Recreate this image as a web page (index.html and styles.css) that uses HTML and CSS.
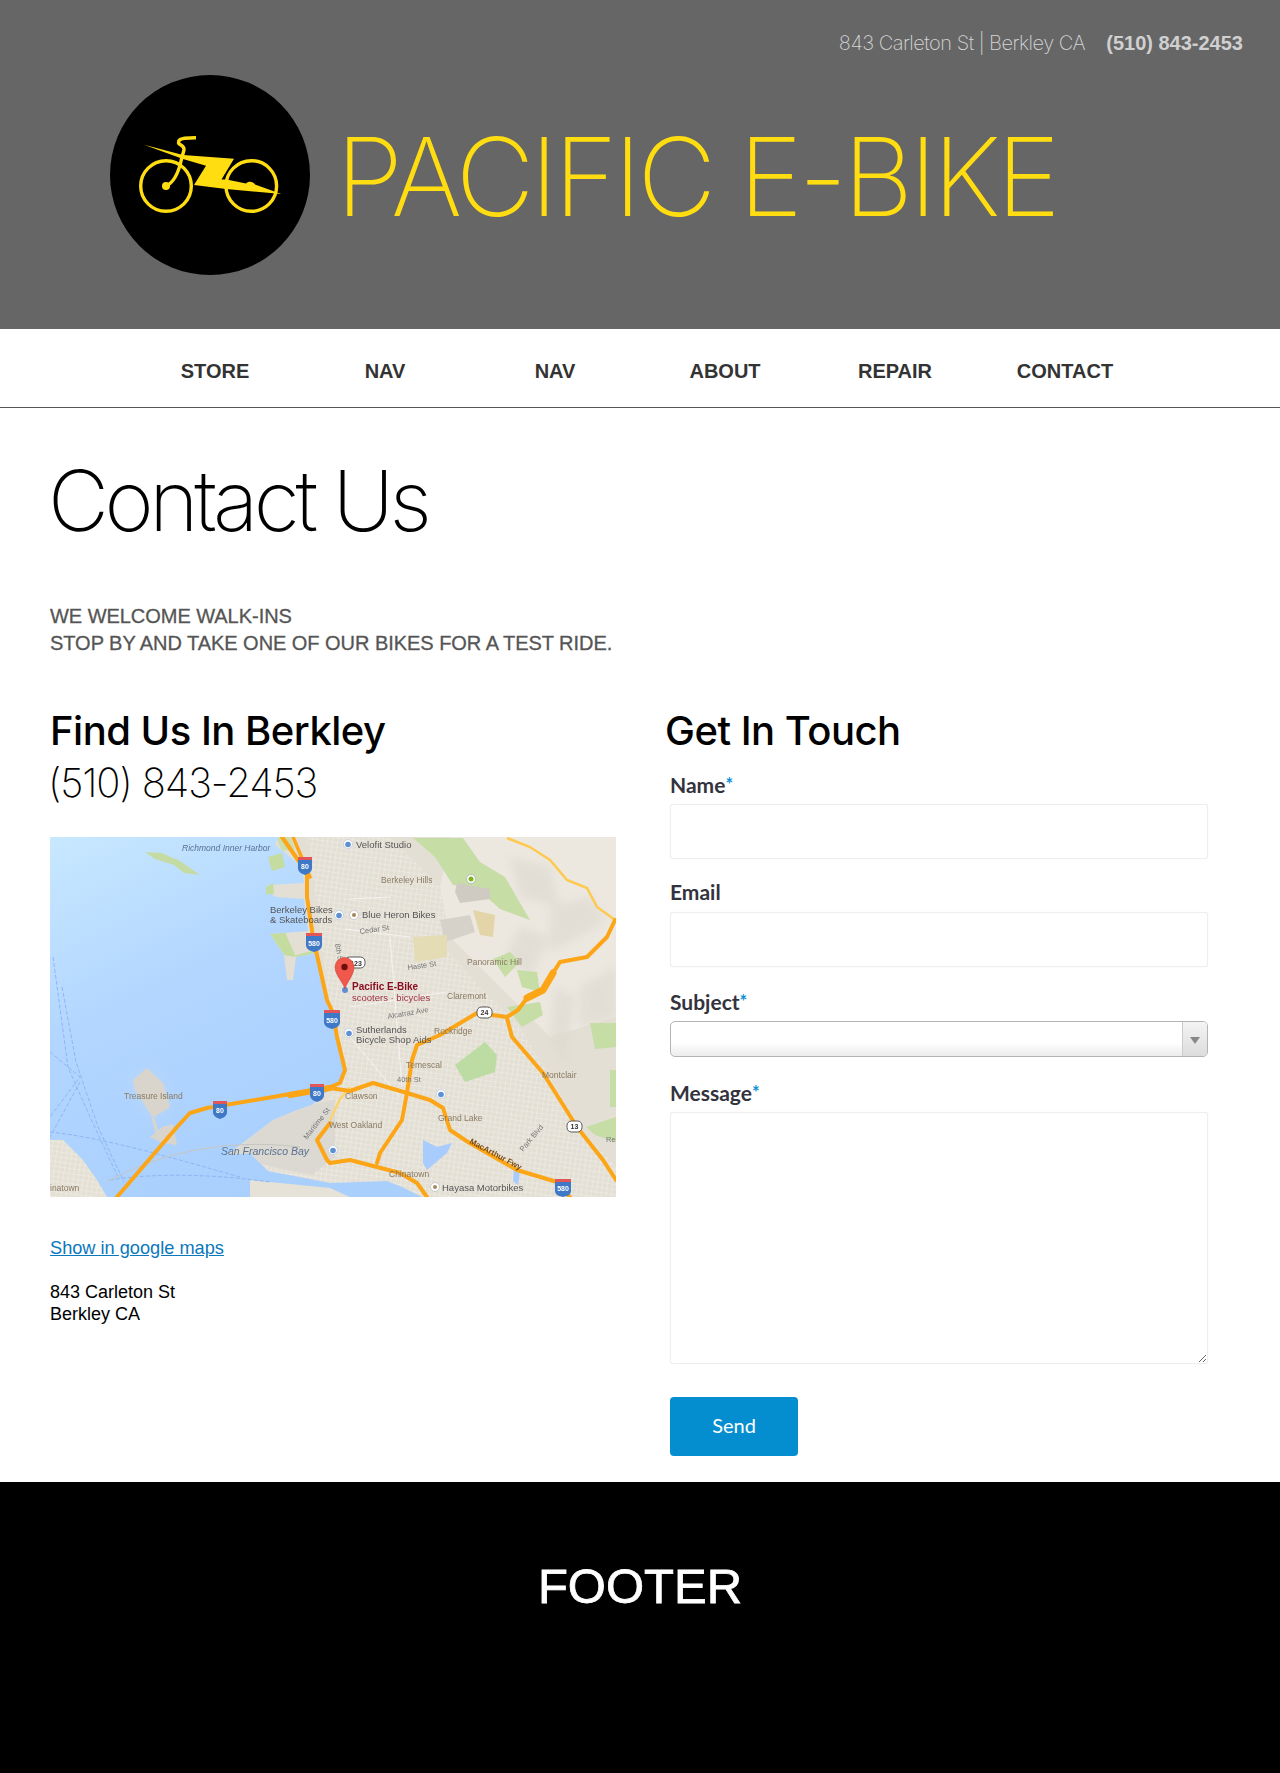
FILE: index.html
```html
<!DOCTYPE html>
<html lang="en">
<head>
<meta charset="utf-8">
<title>Pacific E-Bike</title>
<link rel="stylesheet" href="styles.css">
</head>
<body>
<header class="site-header">
  <div class="topline"><span>843 Carleton St | Berkley CA</span><strong>(510) 843-2453</strong></div>
  <div class="brand">
    <svg class="logo" viewBox="0 0 200 200" aria-hidden="true">
      <circle cx="100" cy="100" r="100" fill="#000"/>
      <g fill="none" stroke="#ffdd11">
        <circle cx="56" cy="111" r="25.300" stroke-width="3.400"/>
        <circle cx="141.300" cy="111" r="25.300" stroke-width="3.400"/>
        <path d="M56 111C65 107 69 96 71.500 84L74 75C75 69.500 67 70 68.700 67C68 63 76 63 86 62.700" stroke-width="3.400"/>
      </g>
      <g fill="#ffdd11">
        <circle cx="56" cy="111" r="4"/>
        <path d="M34 69.700L73 80L124 83.700L111.500 104.500L116.500 104.500L136 108.500C138 106 143 106 145 109.500L171.300 119L116 114L84 110L96 90.700L73 84Z"/>
      </g>
    </svg>
    <div class="brand-name">PACIFIC E-BIKE</div>
  </div>
</header>
<nav class="main-nav">
  <a>STORE</a><a>NAV</a><a>NAV</a><a>ABOUT</a><a>REPAIR</a><a>CONTACT</a>
</nav>
<main class="content">
  <h1>Contact Us</h1>
  <p class="intro">WE WELCOME WALK-INS<br>STOP BY AND TAKE ONE OF OUR BIKES FOR A TEST RIDE.</p>
  <div class="columns">
    <section class="col-left">
      <h2>Find Us In Berkley</h2>
      <div class="phone">(510) 843-2453</div>
      <svg class="map" viewBox="0 0 566 360" aria-label="Map of Berkeley and Oakland">
        <defs>
          <linearGradient id="bay" x1="0" y1="0" x2="0.6" y2="0.8">
            <stop offset="0" stop-color="#c8e8ff"/><stop offset="0.45" stop-color="#b2d6ff"/><stop offset="1" stop-color="#a9cffd"/>
          </linearGradient>
          <pattern id="grid" width="5" height="5" patternUnits="userSpaceOnUse" patternTransform="rotate(8)">
            <path d="M0 0H5M0 0V5" stroke="#fff" stroke-width=".7" fill="none"/>
          </pattern>
          <clipPath id="land-clip"><path d="M228 0L225 8L240 20L252 30L254 46L218 48L216 54L226 60L254 62L258 94L220 97L234 118L237 143L243 143L246 120L266 116L277 163L283 176L287 200L297 233L290 248L280 252L262 268L247 273L223 283L177 318L200 316L218 334L280 346L337 344L352 350L372 360L566 360V0Z"/></clipPath>
          <filter id="soft" x="0" y="0" width="100%" height="100%"><feGaussianBlur stdDeviation=".4"/></filter>
          <filter id="hill" x="-20%" y="-20%" width="140%" height="140%"><feGaussianBlur stdDeviation="4"/></filter>
          <filter id="halo" x="-30%" y="-30%" width="160%" height="160%"><feGaussianBlur stdDeviation="8"/></filter>
        </defs>
        <g filter="url(#soft)">
          <rect width="566" height="360" fill="url(#bay)"/>
          <g clip-path="url(#land-clip)">
            <rect width="566" height="360" fill="#e3dfd4"/>
            <path d="M258 0L340 0L400 60L395 110L430 150L470 190L500 240L530 290L566 330V360H200V340L290 250Z" fill="url(#grid)" opacity=".7"/>
            <path d="M223 283L262 268L285 262L285 320L262 338L222 330L180 318Z" fill="#dcd9d3"/>
            <path d="M400 0H566V180L500 200L450 150L400 100L390 50Z" fill="#ece8e0"/>
            <g filter="url(#hill)" fill="#dedad0" opacity=".7">
              <path d="M500 70L540 60L556 85L500 115Z"/><path d="M470 90L500 100L480 140L455 120Z"/><path d="M530 150L566 130V180L530 190Z"/><path d="M460 20L500 30L510 70L470 60Z"/><path d="M505 150L525 160L515 230L500 200Z"/>
            </g>
            <path d="M363 1L413 1L430 25L455 40L480 83L450 72L425 50L403 48L385 20Z" fill="#c6dda6"/>
            <path d="M407 46L440 52L440 62L410 66L405 55Z" fill="#cfcbc3"/>
            <path d="M390 83L420 78L425 95L395 105Z" fill="#d6d2ca"/>
            <path d="M423 73L445 78L443 100L430 98Z" fill="#e3d5a8"/>
            <path d="M363 100L397 98L397 120L365 125Z" fill="#e3dcb4"/>
            <path d="M443 122L460 115L470 125L455 140Z" fill="#c6dda6"/>
            <path d="M467 133L487 135L490 155L472 150Z" fill="#c6dda6"/>
            <path d="M457 170L490 165L493 178L472 190Z" fill="#c6dda6"/>
            <path d="M435 205L447 218L445 235L415 245L405 228Z" fill="#bcdca3"/>
            <path d="M540 186L566 186V210L545 212Z" fill="#c6dda6"/>
            <path d="M560 233H566V270H560Z" fill="#c6dda6"/>
            <path d="M536 290L566 280V305L545 298Z" fill="#c6dda6"/>
            <path d="M226 0H240L245 12L232 14Z" fill="#c6dda6" opacity=".8"/>
            <path d="M220 97L235 95L246 120L234 118Z" fill="#c4dc9f"/>
            <path d="M246 118L266 113L268 130L250 140Z" fill="#c4dc9f"/>
            <path d="M373 303L387 310L402 306L397 316L377 333L373 326Z" fill="#a9ccff"/>
            <path d="M464 328L470 334L468 348L463 344Z" fill="#a9ccff"/>
            <path d="M295 92L360 100M300 170L397 155M300 200L350 260M300 62L340 60M340 100L352 250" fill="none" stroke="#fff" stroke-width="1" opacity=".6"/>
          </g>
          <path d="M200 343L280 351L300 360H200Z" fill="#e6e2d7"/>
          <path d="M0 303L13 303L33 323L47 343L57 360H0Z" fill="#e4e0d4"/>
          <path d="M0 303L13 303L33 323L47 343L57 360H0Z" fill="url(#grid)" opacity=".7"/>
          <path d="M83 243L97 231L113 246L120 270L103 281L85 253Z" fill="#bcd8f8" filter="url(#halo)"/>
          <path d="M83 243L97 231L113 246L120 270L103 281L85 253Z" fill="#d9d5cc"/>
          <path d="M100 300L112 290L123 287L127 308L112 306Z" fill="#d9d5cc"/>
          <path d="M103 281L107 295" stroke="#d9d5cc" stroke-width="3"/>
          <path d="M95 15L112 16L130 24L150 38L134 36L124 28L105 22Z" fill="#c5dba4"/>
          <path d="M218 20L232 16L235 30L222 34Z" fill="#c4dc9f"/>
          <path d="M216 50L223 46L224 57L216 57Z" fill="#c4dc9f"/>
          <path d="M3 120L18 230L40 280L68 340M12 150L26 225L48 290L74 345M0 215L30 240L0 280M0 295C50 300 120 320 190 340M60 343C110 335 170 338 220 345M30 245L0 300" fill="none" stroke="#8fb6f2" stroke-width="1" stroke-dasharray="4 2"/>
          <path d="M57 345C100 320 170 300 250 310" fill="none" stroke="#c8c6c0" stroke-width="1"/>
          <path d="M457 1L480 10L500 23L517 43L537 51L547 70L565 83" fill="none" stroke="#fdc94f" stroke-width="2.500"/>
          <path d="M300 250L290 262L280 283" fill="none" stroke="#fbd36f" stroke-width="2.500"/>
          <g fill="none" stroke="#fca514" stroke-linejoin="round" stroke-linecap="round">
            <path d="M232 0L257 36L257 60L263 100L277 163L283 176L287 200L295 233L290 246L280 250L223 260L157 271L140 276L127 290L67 360" stroke-width="4"/>
            <path d="M243 0L260 40" stroke-width="3.500"/>
            <path d="M280 251L240 258" stroke-width="6"/>
            <path d="M280 251L300 254L323 246L357 256L380 263L393 271L400 293L418 305L467 333L507 345L520 360" stroke-width="4"/>
            <path d="M357 256L362 223L367 208L390 198L427 176L457 180L468 173L477 161L493 153L503 136L510 125L537 120L557 100L565 83" stroke-width="4"/>
            <path d="M477 161L493 153L503 136" stroke-width="7"/>
            <path d="M357 256L352 283L330 316L327 326" stroke-width="4"/>
            <path d="M457 181L462 200L493 236L527 290L553 323L566 343" stroke-width="4"/>
            <path d="M280 326L300 323L327 330L350 336L367 346L377 360" stroke-width="4"/>
            <path d="M280 286L267 303L277 323L280 326" stroke-width="4"/>
          </g>
          <g fill="#3f78c8">
            <path d="M248 22H262V31C262 35 258 37 255 38C252 37 248 35 248 31Z"/><path d="M256 98H272V108C272 112 268 114 264 115C260 114 256 112 256 108Z"/><path d="M274 175H290V185C290 189 286 191 282 192C278 191 274 189 274 185Z"/><path d="M163 266H177V275C177 279 173 281 170 282C167 281 163 279 163 275Z"/><path d="M260 249H274V258C274 262 270 264 267 265C264 264 260 262 260 258Z"/><path d="M505 344H521V354C521 358 517 359 513 360C509 359 505 358 505 354Z"/>
          </g>
          <g fill="#e2575a">
            <rect x="248" y="20" width="14" height="3"/><rect x="256" y="96" width="16" height="3"/><rect x="274" y="173" width="16" height="3"/><rect x="163" y="264" width="14" height="3"/><rect x="260" y="247" width="14" height="3"/><rect x="505" y="342" width="16" height="3"/>
          </g>
          <g class="shield-text" text-anchor="middle">
            <text x="255" y="32">80</text><text x="264" y="109">580</text><text x="282" y="186">580</text><text x="170" y="276">80</text><text x="267" y="259">80</text><text x="513" y="354">580</text>
          </g>
          <g fill="#fff" stroke="#555">
            <rect x="427" y="170" width="15" height="11" rx="4.500"/><rect x="517" y="284" width="15" height="11" rx="4.500"/><rect x="295" y="120" width="20" height="11" rx="4.500"/>
          </g>
          <g class="shield-dark" text-anchor="middle"><text x="434.500" y="178">24</text><text x="524.500" y="292">13</text><text x="306" y="128.500">123</text></g>
          <g fill="#fff" stroke="#c8d4e4">
            <circle cx="298" cy="7" r="4.500"/><circle cx="289" cy="78" r="4.500"/><circle cx="299" cy="196" r="4.500"/><circle cx="391" cy="257" r="4.500"/><circle cx="283" cy="313" r="4.500"/>
          </g>
          <g fill="#5d8fd2">
            <circle cx="298" cy="7.500" r="2.800"/><circle cx="289" cy="78.500" r="2.800"/><circle cx="299" cy="196.500" r="2.800"/><circle cx="391" cy="257.500" r="2.800"/><circle cx="283" cy="313.500" r="2.800"/><circle cx="295" cy="153" r="3"/>
          </g>
          <g fill="#fff" stroke="#ccc"><circle cx="304" cy="78" r="4.500"/><circle cx="385" cy="350" r="4.500"/></g>
          <g fill="#a58560"><circle cx="304" cy="78" r="2"/><circle cx="385" cy="350" r="2"/></g>
          <circle cx="421" cy="42" r="4.500" fill="#fff" stroke="#bbb"/><circle cx="421" cy="42" r="2.500" fill="#7cb518"/>
          <g class="ml">
            <text x="306" y="11" class="poi">Velofit Studio</text>
            <text x="331" y="46" class="area">Berkeley Hills</text>
            <text x="312" y="81" class="poi">Blue Heron Bikes</text>
            <text x="220" y="76" class="poi">Berkeley Bikes</text>
            <text x="220" y="86" class="poi">&amp; Skateboards</text>
            <text x="310" y="97" class="street" transform="rotate(-8 310 97)">Cedar St</text>
            <text x="285" y="107" class="street" transform="rotate(80 285 107)">8th St</text>
            <text x="358" y="133" class="street" transform="rotate(-8 358 133)">Haste St</text>
            <text x="417" y="128" class="area">Panoramic Hill</text>
            <text x="397" y="162" class="area">Claremont</text>
            <text x="338" y="182" class="street" transform="rotate(-10 338 182)">Alcatraz Ave</text>
            <text x="306" y="196" class="poi">Sutherlands</text>
            <text x="306" y="206" class="poi">Bicycle Shop Aids</text>
            <text x="384" y="197" class="area">Rockridge</text>
            <text x="356" y="231" class="area">Temescal</text>
            <text x="347" y="245" class="street">40th St</text>
            <text x="492" y="241" class="area">Montclair</text>
            <text x="295" y="262" class="area">Clawson</text>
            <text x="279" y="291" class="area">West Oakland</text>
            <text x="388" y="284" class="area">Grand Lake</text>
            <text x="339" y="340" class="area">Chinatown</text>
            <text x="392" y="354" class="poi">Hayasa Motorbikes</text>
            <text x="473" y="315" class="street" transform="rotate(-50 473 315)">Park Blvd</text>
            <text x="419" y="306" class="fwy" transform="rotate(28 419 306)">MacArthur Fwy</text>
            <text x="257" y="303" class="street" transform="rotate(-52 257 303)">Maritime St</text>
            <text x="132" y="14" class="water">Richmond Inner Harbor</text>
            <text x="171" y="318" class="water big">San Francisco Bay</text>
            <text x="74" y="262" class="area">Treasure Island</text>
            <text x="0" y="354" class="area">inatown</text>
            <text x="556" y="305" class="street">Re</text>
            <text x="302" y="153" class="pin-title">Pacific E-Bike</text>
            <text x="302" y="164" class="pin-sub">scooters · bicycles</text>
          </g>
          <path d="M295 152C293 145 285 138 285 130A9.500 9.500 0 0 1 304 130C304 138 297 145 295 152Z" fill="#f0584c" stroke="#c8362c" stroke-width=".5"/>
          <circle cx="294.500" cy="130" r="3.200" fill="#701010"/>
        </g>
      </svg>
      <a class="maps-link">Show in google maps</a>
      <p class="address">843 Carleton St<br>Berkley CA</p>
    </section>
    <section class="col-right">
      <h2>Get In Touch</h2>
      <form class="form">
        <label>Name<span class="req">*</span></label>
        <input class="field" type="text">
        <label>Email</label>
        <input class="field field-email" type="text">
        <label>Subject<span class="req">*</span></label>
        <div class="select"><span class="select-arrow"></span></div>
        <label>Message<span class="req">*</span></label>
        <textarea class="field area-field"></textarea>
        <button class="send" type="button">Send</button>
      </form>
    </section>
  </div>
</main>
<footer class="site-footer">FOOTER</footer>
</body>
</html>
```
FILE: styles.css
```css
* { box-sizing: border-box; }
html, body { margin: 0; padding: 0; }
body { background: #fff; font-family: "Inter", "Liberation Sans", sans-serif; color: #000; width: 1280px; }

.site-header { height: 329px; background: #666; padding: 30px 37px 0 110px; }
.topline { display: flex; justify-content: flex-end; gap: 21px; font-size: 20px; line-height: 26px; font-weight: 200; color: #d6d6d6; }
.topline span { letter-spacing: -.5px; }
.topline strong { font-weight: 600; color: #d0d0d0; font-family: "Liberation Sans", sans-serif; }
.brand { display: flex; align-items: center; gap: 26px; margin-top: 19px; }
.logo { width: 200px; height: 200px; flex: none; }
.brand-name { font-size: 108.600px; line-height: 1; font-weight: 200; color: #ffdd11; letter-spacing: -4px; white-space: nowrap; padding-top: 4px; }

.main-nav { height: 79px; border-bottom: 1px solid #555; padding: 6px 0 0 130px; display: grid; grid-template-columns: repeat(6, 170px); align-items: center; justify-items: center; font-family: "Liberation Sans", sans-serif; font-weight: 700; font-size: 20px; color: #333; }

.content { padding: 0 0 0 50px; height: 1074px; }
h1 { margin: 0 0 0 -2px; padding-top: 43px; font-size: 84px; line-height: 100px; font-weight: 150; letter-spacing: -4.400px; }
.intro { margin: 52px 0 0; font-size: 20px; line-height: 27px; color: #555; font-family: "Liberation Sans", sans-serif; -webkit-text-stroke: .3px #555; letter-spacing: -.04px; }
.columns { display: grid; grid-template-columns: 566px 543px; column-gap: 49px; margin-top: 50px; }
h2 { margin: 0; font-size: 40px; line-height: 48px; font-weight: 500; letter-spacing: -.5px; }
.phone { font-size: 40px; line-height: 48px; font-weight: 200; margin: 4px 0 0 -2px; letter-spacing: -1.100px; }
.map { display: block; width: 566px; height: 360px; margin-top: 30px; }
.map text { font-family: "Liberation Sans", sans-serif; }
.shield-text text { font-size: 7px; font-weight: 700; fill: #fff; }
.shield-dark text { font-size: 7px; font-weight: 700; fill: #333; }
.poi { font-size: 9.500px; fill: #555; }
.area { font-size: 8.500px; fill: #8a7a62; }
.street { font-size: 7.500px; fill: #777; }
.fwy { font-size: 8px; fill: #7a4a10; font-weight: 700; }
.water { font-size: 8.500px; font-style: italic; fill: #5a7090; }
.water.big { font-size: 10.500px; }
.pin-title { font-size: 10px; font-weight: 700; fill: #8b1020; }
.pin-sub { font-size: 9.500px; fill: #a03040; }
.maps-link { display: block; margin-top: 39px; font-family: "Liberation Sans", sans-serif; font-size: 18.200px; line-height: 24px; color: #0a78bd; text-decoration: underline; }
.address { margin: 22px 0 0; font-family: "Liberation Sans", sans-serif; font-size: 18px; line-height: 21.500px; }

.form { padding-left: 5px; display: flex; flex-direction: column; margin-top: 17px; }
.form label { font-family: "Lato", sans-serif; font-weight: 700; font-size: 21px; line-height: 24px; color: #33333d; height: 32px; }
.req { color: #0a90d6; font-size: 18px; vertical-align: 2px; }
.field { display: block; width: 538px; height: 55px; border: 1px solid #eee; border-radius: 3px; background: #fff; margin: 0 0 21px; box-shadow: 0 0 1px #e8e8e8; outline: none; padding: 0; }
.field-email { margin-bottom: 22px; }
.select { position: relative; width: 538px; height: 36px; margin-bottom: 23px; border: 1px solid #b4b4b4; border-radius: 5px; background: linear-gradient(#fff 60%, #ececec); }
.select-arrow { position: absolute; right: 0; top: 0; bottom: 0; width: 25px; border-left: 1px solid #ccc; background: linear-gradient(#f4f4f4, #dcdcdc); border-radius: 0 4px 4px 0; }
.select-arrow::after { content: ""; position: absolute; left: 7px; top: 15px; border: 5px solid transparent; border-top: 7px solid #888; border-bottom: 0; }
.area-field { height: 252px; margin-bottom: 33px; resize: both; }
.send { width: 128px; height: 59px; border: 0; border-radius: 4px; background: #058ecf; color: #fff; font-family: "Lato", sans-serif; font-size: 20px; padding: 0 0 4px; }

.site-footer { height: 291px; background: #000; color: #fff; text-align: center; font-size: 49px; line-height: 60px; padding-top: 74px; font-family: "Liberation Sans", sans-serif; -webkit-text-stroke: .8px #fff; }
```
